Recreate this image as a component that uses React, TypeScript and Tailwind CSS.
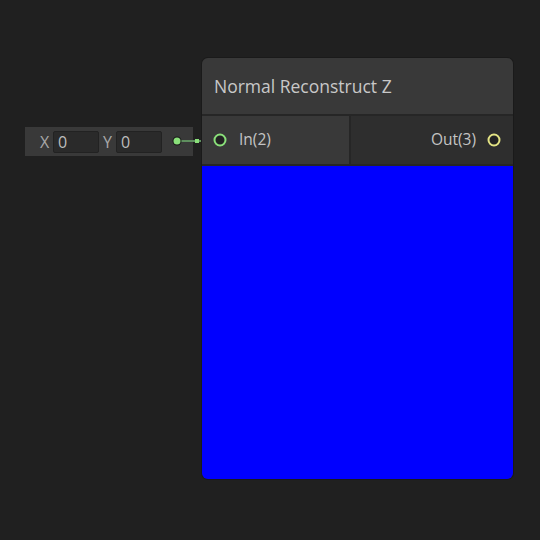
import React from "react";

const Port = ({ color }: { color: string }) => (
  <svg width="14" height="14" viewBox="0 0 14 14" className="shrink-0">
    <circle cx="7" cy="7" r="5.5" fill="#232323" stroke={color} strokeWidth="2" />
  </svg>
);

export default function App() {
  return (
    <div
      className="relative w-[540px] h-[540px] overflow-hidden bg-[#202020] text-[#c4c4c4]"
      style={{ fontFamily: '"Open Sans", "Noto Sans", sans-serif' }}
    >
      {/* inline vector input */}
      <div className="absolute left-[25px] top-[127px] w-[168px] h-[29px] bg-[#393939] flex items-center pl-[15px] text-[16px]">
        <span className="w-[13px] text-[#a8a8a8]">X</span>
        <div className="w-[46px] h-[22px] bg-[#2a2a2a] border border-[#222] rounded-[2px] flex items-center pl-[4px] text-[#bdbdbd]">0</div>
        <span className="ml-[4px] w-[13px] text-[#a8a8a8]">Y</span>
        <div className="w-[46px] h-[22px] bg-[#2a2a2a] border border-[#222] rounded-[2px] flex items-center pl-[4px] text-[#bdbdbd]">0</div>
      </div>

      {/* edge */}
      <svg className="absolute left-[170px] top-[134px]" width="50" height="14" viewBox="0 0 50 14">
        <line x1="7" y1="7" x2="44" y2="7" stroke="#5f8f5f" strokeWidth="2" />
        <circle cx="7" cy="7" r="4.5" fill="#181818" />
        <circle cx="7" cy="7" r="3.5" fill="#8ae07a" />
        <rect x="25" y="5" width="4" height="4" fill="#8ae07a" />
      </svg>

      {/* node */}
      <div className="absolute left-[202px] top-[58px] w-[311px] rounded-[6px] overflow-hidden bg-[#252525] shadow-[0_0_0_1px_#1a1a1a]">
        <div className="h-[56px] bg-[#393939] flex items-center pl-[12px] text-[17.5px] text-[#c8c8c8]">
          Normal Reconstruct Z
        </div>
        <div className="h-[2px] bg-[#262626]" />
        <div className="flex h-[48px]">
          <div className="w-[147px] bg-[#393939] flex items-center gap-[12px] pl-[11px] text-[15.5px]">
            <Port color="#8ae07a" />
            <span>In(2)</span>
          </div>
          <div className="w-[2px] bg-[#262626]" />
          <div className="flex-1 bg-[#2e2e2e] flex items-center justify-end gap-[11px] pr-[12px] text-[15.5px]">
            <span>Out(3)</span>
            <Port color="#e3e384" />
          </div>
        </div>
        <div className="h-[2px] bg-[#262626]" />
        <div className="h-[313px] bg-[#0000ff]" />
      </div>
    </div>
  );
}
